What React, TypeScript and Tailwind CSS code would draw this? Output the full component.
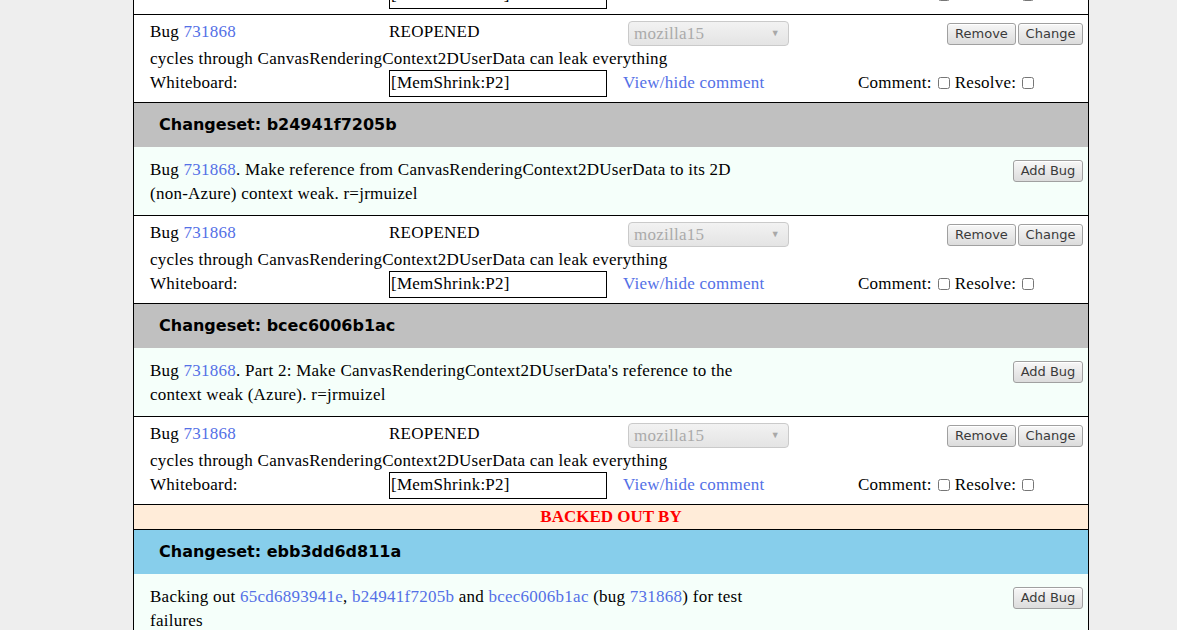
import React from "react";

const serif = { fontFamily: '"Liberation Serif", serif' };

function Btn({ children, w }: { children: React.ReactNode; w: string }) {
  return (
    <span
      className={`inline-flex items-center justify-center h-[22px] ${w} rounded-[3px] border border-[#a0a0a0] bg-gradient-to-b from-[#f7f7f7] to-[#dcdcdc] text-[13px] tracking-normal text-[#3a3a3a] shadow-[inset_0_1px_0_#fff]`}
      style={{ fontFamily: '"DejaVu Sans", sans-serif' }}
    >
      {children}
    </span>
  );
}

const Link = ({ children }: { children: React.ReactNode }) => (
  <span className="text-[#5470e6]">{children}</span>
);

function BugRow() {
  return (
    <div className="border-b border-black bg-white pl-4 pr-[5px] pb-[5px] text-[17px] tracking-[0.25px] text-black" style={serif}>
      <div className="flex h-[33px] items-center">
        <div className="w-[239px]">
          Bug <Link>731868</Link>
        </div>
        <div className="w-[239px]">REOPENED</div>
        <div className="mt-[4px] flex h-[25px] w-[161px] items-center justify-between rounded-[4px] border border-[#cacaca] bg-gradient-to-b from-[#f2f2f2] to-[#e4e4e4] pl-[5px] pr-[8px] text-[#aaaaaa]">
          <span>mozilla15</span>
          <span className="text-[9px] text-[#a8a8a8]">▼</span>
        </div>
        <div className="ml-auto flex gap-[2px] pt-[5px]">
          <Btn w="w-[69px]">Remove</Btn>
          <Btn w="w-[65px]">Change</Btn>
        </div>
      </div>
      <div className="flex h-[21px] items-center whitespace-nowrap">
        cycles through CanvasRenderingContext2DUserData can leak everything
      </div>
      <div className="flex h-[28px] items-center">
        <div className="w-[239px]">Whiteboard:</div>
        <div className="w-[234px]">
          <div className="flex h-[27px] w-[218px] items-center border border-black bg-white pl-[1px]">
            [MemShrink:P2]
          </div>
        </div>
        <div className="w-[235px]">
          <Link>View/hide comment</Link>
        </div>
        <div className="flex items-center">
          Comment:
          <input type="checkbox" className="ml-[6px] mr-[5px] h-[12px] w-[12px]" />
          Resolve:
          <input type="checkbox" className="ml-[6px] h-[12px] w-[12px]" />
        </div>
      </div>
    </div>
  );
}

function Header({ id, blue }: { id: string; blue?: boolean }) {
  return (
    <div
      className={`flex h-[44px] items-center border-black pl-[25px] text-[16px] font-bold text-black ${blue ? "bg-[#87ceeb]" : "bg-[#c0c0c0]"}`}
      style={{ fontFamily: '"DejaVu Sans", sans-serif' }}
    >
      Changeset: {id}
    </div>
  );
}

function Desc({ children }: { children: React.ReactNode }) {
  return (
    <div className="flex border-b border-black bg-[#f5fffa] pl-4 pr-[5px] pt-[11px] pb-[9px] text-[17px] tracking-[0.25px] leading-6 text-black" style={serif}>
      <div className="w-[620px]">{children}</div>
      <div className="ml-auto">
        <Btn w="w-[70px]">Add Bug</Btn>
      </div>
    </div>
  );
}

export default function App() {
  return (
    <div className="h-[630px] w-[1177px] overflow-hidden bg-[#eeeeee]">
      <div className="ml-[133px] mt-[-73px] w-[956px] border-x border-black bg-white">
        <BugRow />
        <BugRow />
        <Header id="b24941f7205b" />
        <Desc>
          Bug <Link>731868</Link>. Make reference from CanvasRenderingContext2DUserData to its 2D
          <br />
          (non-Azure) context weak. r=jrmuizel
        </Desc>
        <BugRow />
        <Header id="bcec6006b1ac" />
        <Desc>
          Bug <Link>731868</Link>. Part 2: Make CanvasRenderingContext2DUserData's reference to the
          <br />
          context weak (Azure). r=jrmuizel
        </Desc>
        <BugRow />
        <div
          className="flex h-[25px] items-center justify-center border-b border-black bg-[#ffecd9] text-[17px] font-bold text-[#ff0000]"
          style={serif}
        >
          BACKED OUT BY
        </div>
        <Header id="ebb3dd6d811a" blue />
        <Desc>
          Backing out <Link>65cd6893941e</Link>, <Link>b24941f7205b</Link> and{" "}
          <Link>bcec6006b1ac</Link> (bug <Link>731868</Link>) for test
          <br />
          failures
        </Desc>
      </div>
    </div>
  );
}
